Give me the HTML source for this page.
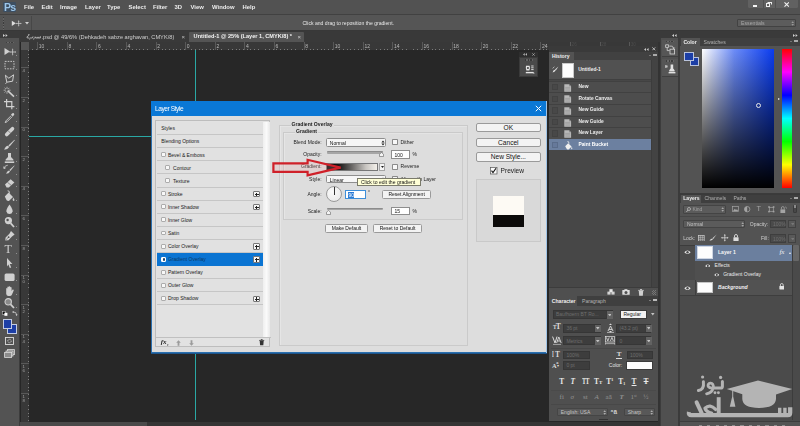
<!DOCTYPE html>
<html>
<head>
<meta charset="utf-8">
<title>Layer Style</title>
<style>
*{box-sizing:border-box;margin:0;padding:0}
html,body{width:800px;height:426px;overflow:hidden;background:#262626}
body{font-family:"Liberation Sans",sans-serif;font-size:6.5px;color:#ddd;position:relative}
.a{position:absolute}
.t{position:absolute;white-space:nowrap;line-height:1}
#stage{position:absolute;left:0;top:0;width:800px;height:426px;overflow:hidden;filter:blur(0.4px)}
/* top bars */
#menubar{left:0;top:0;width:800px;height:14px;background:#525252}
#optbar{left:0;top:14px;width:800px;height:17px;background:#555555;border-top:1px solid #414141;border-bottom:1px solid #383838}
#menubar .t{top:5.3px;font-size:5.9px;font-weight:bold;color:#ececec}
/* tab bar */
#dockgap{left:0;top:31px;width:800px;height:7px;background:#3b3b3b}
#tabbar{left:20px;top:31px;width:640px;height:11px;background:#393939}
/* toolbar */
#tools{left:0;top:38px;width:20px;height:388px;background:#535353;border-right:1px solid #3c3c3c}
/* canvas */
#canvas{left:29px;top:50px;width:631px;height:372px;background:#272727}
#rulerh{left:21px;top:42px;width:639px;height:8px;background:#383838;overflow:hidden}
#rulerv{left:21px;top:50px;width:8px;height:372px;background:#383838;overflow:hidden}
/* dialog */
#dlg{left:150.5px;top:101px;width:396.7px;height:252.4px;background:#dddddd;box-shadow:inset 0 0 0 1px #2a6fae}
#dlgtitle{left:150.5px;top:101px;width:396.7px;height:14.8px;background:#0a78d6}
#list{left:155.2px;top:120px;width:114.8px;height:227px;background:#e2e2e2;border:0.8px solid #bdbdbd}
.row{position:absolute;left:0.5px;width:106.2px;height:13.07px;border-bottom:0.8px solid #c6c6c6;color:#1a1a1a;font-size:5px;background:#e1e1e1}
.row .t{top:4.2px}
.row.sel{background:#0a74d2;color:#0c3a66;border-bottom-color:#0a74d2}
.cb{position:absolute;left:4.4px;top:3.8px;width:4.9px;height:4.9px;background:#f8f8f8;border:0.6px solid #acacac;border-radius:1px}
.cb.on{background:#fff;border-color:#fff}
.cb.on:after{content:"";position:absolute;left:0.8px;top:0.6px;width:2px;height:2.4px;border-radius:1px;background:#246}
.plus{position:absolute;left:96.7px;top:3.4px;width:6.4px;height:6.4px;background:#f6f6f6;border:0.6px solid #777;border-radius:1px}
.plus:before{content:"";position:absolute;left:0.8px;top:2.1px;width:3.6px;height:1px;background:#222}
.plus:after{content:"";position:absolute;left:2.1px;top:0.8px;width:1px;height:3.6px;background:#222}
.btn{position:absolute;background:#f3f3f3;border:0.7px solid #9a9a9a;border-radius:1.5px;color:#111;text-align:center;white-space:nowrap}
.inp{position:absolute;background:#fff;border:0.7px solid #8e8e8e}
.lbl{position:absolute;white-space:nowrap;color:#1c1c1c;font-size:5px;line-height:1}
.lbl.r{left:270px;width:51.6px;text-align:right}
.cb2{position:absolute;width:6.2px;height:6.2px;background:#f8f8f8;border:0.7px solid #8a8a8a;border-radius:0.8px}
.btn.big{width:64.6px;height:9.8px;font-size:6.6px;line-height:8.4px;border-radius:2px}
.hrow.hsel{background:#6c80a0;border-top-color:#6c80a0;color:#fff}
.hrow{background:#4d4d4d}
.tb{position:absolute;top:81.2px;font-family:"Liberation Serif",serif;font-weight:bold;font-size:7.4px;line-height:1;color:#e9e9e9;white-space:nowrap}
.ot{position:absolute;top:98px;font-family:"Liberation Serif",serif;font-size:7px;line-height:1;color:#929292;white-space:nowrap}
/* panels */
.panel{position:absolute;background:#535353}
.ptab{position:absolute;background:#3d3d3d}
.hrow{position:absolute;left:0;width:102px;height:11.7px;border-top:0.9px solid #414141;font-size:5.1px;color:#ececec}
</style>
</head>
<body>
<div id="stage">

<!-- canvas area -->
<div class="a" id="canvas"></div>
<div class="a" id="rulerh"><div class="a" style="left:16.2px;top:0;width:0.8px;height:8px;background:#585858"></div><div class="t" style="left:17.8px;top:2.2px;font-size:5px;color:#b8b8b8">10</div><div class="a" style="left:45.8px;top:0;width:0.8px;height:8px;background:#585858"></div><div class="t" style="left:47.4px;top:2.2px;font-size:5px;color:#b8b8b8">8</div><div class="a" style="left:75.4px;top:0;width:0.8px;height:8px;background:#585858"></div><div class="t" style="left:77.0px;top:2.2px;font-size:5px;color:#b8b8b8">6</div><div class="a" style="left:105.0px;top:0;width:0.8px;height:8px;background:#585858"></div><div class="t" style="left:106.6px;top:2.2px;font-size:5px;color:#b8b8b8">4</div><div class="a" style="left:134.6px;top:0;width:0.8px;height:8px;background:#585858"></div><div class="t" style="left:136.2px;top:2.2px;font-size:5px;color:#b8b8b8">2</div><div class="a" style="left:164.2px;top:0;width:0.8px;height:8px;background:#585858"></div><div class="t" style="left:165.8px;top:2.2px;font-size:5px;color:#b8b8b8">0</div><div class="a" style="left:193.8px;top:0;width:0.8px;height:8px;background:#585858"></div><div class="t" style="left:195.4px;top:2.2px;font-size:5px;color:#b8b8b8">2</div><div class="a" style="left:223.4px;top:0;width:0.8px;height:8px;background:#585858"></div><div class="t" style="left:225.0px;top:2.2px;font-size:5px;color:#b8b8b8">4</div><div class="a" style="left:253.0px;top:0;width:0.8px;height:8px;background:#585858"></div><div class="t" style="left:254.6px;top:2.2px;font-size:5px;color:#b8b8b8">6</div><div class="a" style="left:282.6px;top:0;width:0.8px;height:8px;background:#585858"></div><div class="t" style="left:284.2px;top:2.2px;font-size:5px;color:#b8b8b8">8</div><div class="a" style="left:312.2px;top:0;width:0.8px;height:8px;background:#585858"></div><div class="t" style="left:313.8px;top:2.2px;font-size:5px;color:#b8b8b8">10</div><div class="a" style="left:341.8px;top:0;width:0.8px;height:8px;background:#585858"></div><div class="t" style="left:343.4px;top:2.2px;font-size:5px;color:#b8b8b8">12</div><div class="a" style="left:371.4px;top:0;width:0.8px;height:8px;background:#585858"></div><div class="t" style="left:373.0px;top:2.2px;font-size:5px;color:#b8b8b8">14</div><div class="a" style="left:401.0px;top:0;width:0.8px;height:8px;background:#585858"></div><div class="t" style="left:402.6px;top:2.2px;font-size:5px;color:#b8b8b8">16</div><div class="a" style="left:430.6px;top:0;width:0.8px;height:8px;background:#585858"></div><div class="t" style="left:432.2px;top:2.2px;font-size:5px;color:#b8b8b8">18</div><div class="a" style="left:460.2px;top:0;width:0.8px;height:8px;background:#585858"></div><div class="t" style="left:461.8px;top:2.2px;font-size:5px;color:#b8b8b8">20</div><div class="a" style="left:489.8px;top:0;width:0.8px;height:8px;background:#585858"></div><div class="t" style="left:491.4px;top:2.2px;font-size:5px;color:#b8b8b8">22</div><div class="a" style="left:519.4px;top:0;width:0.8px;height:8px;background:#585858"></div><div class="t" style="left:521.0px;top:2.2px;font-size:5px;color:#b8b8b8">24</div><div class="a" style="left:549.0px;top:0;width:0.8px;height:8px;background:#585858"></div><div class="t" style="left:550.6px;top:1.2px;font-size:4.6px;color:#4c4c4c">26</div><div class="a" style="left:578.6px;top:0;width:0.8px;height:8px;background:#585858"></div><div class="t" style="left:580.2px;top:1.2px;font-size:4.6px;color:#4c4c4c">28</div><div class="a" style="left:608.2px;top:0;width:0.8px;height:8px;background:#585858"></div><div class="t" style="left:609.8px;top:1.2px;font-size:4.6px;color:#4c4c4c">30</div><div class="a" style="left:637.8px;top:0;width:0.8px;height:8px;background:#585858"></div><div class="t" style="left:639.4px;top:1.2px;font-size:4.6px;color:#4c4c4c">32</div><div class="a" style="left:0;top:6.9px;width:640px;height:1.1px;background:repeating-linear-gradient(90deg,#7c7c7c 0,#7c7c7c 0.9px,transparent 0.9px,transparent 3.7px)"></div></div>
<div class="a" id="rulerv"><div class="a" style="left:0;top:17.4px;width:8px;height:0.8px;background:#585858"></div><div class="t" style="left:1.4px;top:19.0px;font-size:4.4px;color:#a0a0a0">4</div><div class="a" style="left:0;top:47.0px;width:8px;height:0.8px;background:#585858"></div><div class="t" style="left:1.4px;top:48.6px;font-size:4.4px;color:#a0a0a0">2</div><div class="a" style="left:0;top:76.6px;width:8px;height:0.8px;background:#585858"></div><div class="t" style="left:1.4px;top:78.2px;font-size:4.4px;color:#a0a0a0">0</div><div class="a" style="left:0;top:106.2px;width:8px;height:0.8px;background:#585858"></div><div class="t" style="left:1.4px;top:107.8px;font-size:4.4px;color:#a0a0a0">2</div><div class="a" style="left:0;top:135.8px;width:8px;height:0.8px;background:#585858"></div><div class="t" style="left:1.4px;top:137.4px;font-size:4.4px;color:#a0a0a0">4</div><div class="a" style="left:0;top:165.4px;width:8px;height:0.8px;background:#585858"></div><div class="t" style="left:1.4px;top:167.0px;font-size:4.4px;color:#a0a0a0">6</div><div class="a" style="left:0;top:195.0px;width:8px;height:0.8px;background:#585858"></div><div class="t" style="left:1.4px;top:196.6px;font-size:4.4px;color:#a0a0a0">8</div><div class="a" style="left:0;top:224.6px;width:8px;height:0.8px;background:#585858"></div><div class="t" style="left:1.4px;top:226.2px;font-size:4.4px;color:#a0a0a0">1</div><div class="t" style="left:1.4px;top:230.4px;font-size:4.4px;color:#a0a0a0">0</div><div class="a" style="left:0;top:254.2px;width:8px;height:0.8px;background:#585858"></div><div class="t" style="left:1.4px;top:255.8px;font-size:4.4px;color:#a0a0a0">1</div><div class="t" style="left:1.4px;top:260.0px;font-size:4.4px;color:#a0a0a0">2</div><div class="a" style="left:0;top:283.8px;width:8px;height:0.8px;background:#585858"></div><div class="t" style="left:1.4px;top:285.4px;font-size:4.4px;color:#a0a0a0">1</div><div class="t" style="left:1.4px;top:289.6px;font-size:4.4px;color:#a0a0a0">4</div><div class="a" style="left:0;top:313.4px;width:8px;height:0.8px;background:#585858"></div><div class="t" style="left:1.4px;top:315.0px;font-size:4.4px;color:#a0a0a0">1</div><div class="t" style="left:1.4px;top:319.2px;font-size:4.4px;color:#a0a0a0">6</div><div class="a" style="left:0;top:343.0px;width:8px;height:0.8px;background:#585858"></div><div class="t" style="left:1.4px;top:344.6px;font-size:4.4px;color:#a0a0a0">1</div><div class="t" style="left:1.4px;top:348.8px;font-size:4.4px;color:#a0a0a0">8</div><div class="a" style="left:6.9px;top:0;width:1.1px;height:372px;background:repeating-linear-gradient(180deg,#7c7c7c 0,#7c7c7c 0.9px,transparent 0.9px,transparent 3.7px)"></div></div>
<div class="a" style="left:21px;top:42px;width:8px;height:8px;background:#555"></div>
<!-- guides -->
<div class="a" style="left:195px;top:50px;width:1px;height:370px;background:#2aa8a4"></div>
<div class="a" style="left:29px;top:136px;width:122px;height:1px;background:#2aa8a4"></div>
<!-- status -->
<div class="a" style="left:20px;top:422px;width:640px;height:4px;background:#353535"></div>
<div class="a" style="left:20px;top:422px;width:127px;height:4px;background:#4a4a4a"></div>

<!-- mini floating panel -->
<div class="a" style="left:519.4px;top:51.6px;width:18.2px;height:5px;background:#2e2e2e">
  <svg class="a" style="left:3.6px;top:1.2px" width="4.4" height="2.8" viewBox="0 0 5 3"><path d="M0 1.5L2 0V3ZM2.6 1.5L4.6 0V3Z" fill="#b8b8b8"/></svg>
  <svg class="a" style="left:12.6px;top:1px" width="3" height="3" viewBox="0 0 4 4"><path d="M0.4 0.4L3.6 3.6M3.6 0.4L0.4 3.6" stroke="#b8b8b8" stroke-width="0.9"/></svg>
</div>
<div class="a" style="left:519.4px;top:56.6px;width:18.2px;height:20.6px;background:#4a4a4a;border:0.7px solid #3a3a3a">
  <div class="a" style="left:4.6px;top:1.8px;width:8.4px;height:1.2px;background:repeating-linear-gradient(90deg,#383838 0,#383838 0.8px,#636363 0.8px,#636363 1.6px)"></div>
  <svg class="a" style="left:4.4px;top:7px" width="10" height="10" viewBox="0 0 10 10"><path d="M1 0.8H4.6Q5.4 3 4.4 5.4H1.4Q0.4 3 1 0.8Z" fill="#e6e6e6"/><circle cx="2.9" cy="3" r="1.1" fill="#4a4a4a"/><path d="M6.2 1H8.6M6.2 2.8H8.6M6.2 4.6H8.6" stroke="#e6e6e6" stroke-width="0.9"/><path d="M0.8 7.6H8.2" stroke="#e6e6e6" stroke-width="1.4"/><path d="M8.6 6.8L9.6 8.4H7.8Z" fill="#e6e6e6"/></svg>
</div>
<!-- top bars -->
<div class="a" id="menubar">
  <div class="a" style="left:3px;top:2px;width:13px;height:9.6px;background:rgba(44,74,108,0.55);border-radius:1px;filter:blur(0.6px)"></div><div class="t" style="left:3.9px;top:1.5px;font-size:10.6px;font-weight:bold;color:#9cc6ea;letter-spacing:-0.7px">Ps</div>
  <div class="t" style="left:24px">File</div>
  <div class="t" style="left:41.5px">Edit</div>
  <div class="t" style="left:60px">Image</div>
  <div class="t" style="left:85px">Layer</div>
  <div class="t" style="left:107px">Type</div>
  <div class="t" style="left:128.5px">Select</div>
  <div class="t" style="left:153px">Filter</div>
  <div class="t" style="left:174.5px">3D</div>
  <div class="t" style="left:190.5px">View</div>
  <div class="t" style="left:212px">Window</div>
  <div class="t" style="left:242.5px">Help</div>
  <div class="a" style="left:748px;top:0;width:50px;height:8.4px;background:#616161;border-radius:0 0 1.5px 1.5px">
    <div class="a" style="left:4.6px;top:5.4px;width:4.6px;height:1.9px;background:#f4f4f4"></div>
    <div class="a" style="left:14.6px;top:0;width:0.6px;height:8.4px;background:#505050"></div>
    <div class="a" style="left:17.6px;top:3.4px;width:4.4px;height:3.4px;border:0.9px solid #f0f0f0"></div>
    <div class="a" style="left:19.4px;top:2px;width:4.4px;height:3.4px;border:0.9px solid #f0f0f0;border-left-color:transparent;border-bottom-color:transparent"></div>
    <div class="a" style="left:27.4px;top:0;width:0.6px;height:8.4px;background:#505050"></div>
    <svg class="a" style="left:36px;top:2.2px" width="5.4" height="5" viewBox="0 0 5.4 5"><path d="M0.5 0.4L4.9 4.6M4.9 0.4L0.5 4.6" stroke="#f4f4f4" stroke-width="1.1" fill="none"/></svg>
  </div>
</div>
<div class="a" id="optbar">
  <svg class="a" style="left:10.6px;top:4.6px" width="11.4" height="7.4" viewBox="0 0 14 9"><path d="M1 0.8L6 4L1 7.2Z" fill="#dcdcdc"/><path d="M9.4 1.4V7M6.6 4.2H12.2" stroke="#cfcfcf" stroke-width="0.9" fill="none"/><path d="M9.4 0.4L8.4 1.8H10.4ZM9.4 8L8.4 6.6H10.4ZM5.6 4.2L7 3.2V5.2ZM13.2 4.2L11.8 3.2V5.2Z" fill="#cfcfcf"/></svg>
  <svg class="a" style="left:24.6px;top:7.2px" width="4" height="3" viewBox="0 0 4 3"><path d="M0 0H4L2 2.6Z" fill="#d0d0d0"/></svg>
  <div class="a" style="left:2.5px;top:1.5px;width:1.2px;height:13px;background:repeating-linear-gradient(180deg,#3c3c3c 0,#3c3c3c 0.8px,#666 0.8px,#666 1.6px)"></div>
  <div class="a" style="left:31px;top:1px;width:0.8px;height:14px;background:#474747"></div>
  <div class="t" style="left:302.5px;top:5.6px;font-size:5.1px;color:#e8e8e8">Click and drag to reposition the gradient.</div>
  <div class="a" style="left:737px;top:3.6px;width:58.6px;height:8.2px;background:#5c5c5c;border:0.7px solid #424242;border-radius:1px"><div class="t" style="left:3px;top:1.5px;font-size:5.2px;color:#a9a9a9">Essentials</div><svg class="a" style="left:53px;top:1.4px" width="3.4" height="5" viewBox="0 0 4 6"><path d="M0.4 2.4L2 0.4L3.6 2.4ZM0.4 3.6L2 5.6L3.6 3.6Z" fill="#9a9a9a"/></svg></div>
</div>
<div class="a" id="dockgap"><svg class="a" style="left:2.6px;top:2.6px" width="5" height="3" viewBox="0 0 5 3"><path d="M2 1.5L0 0V3ZM4.6 1.5L2.6 0V3Z" fill="#d0d0d0"/></svg></div>
<div class="a" id="tabbar">
  <svg class="a" style="left:6px;top:3.2px" width="15" height="6.4" viewBox="0 0 15 6.4"><path d="M14.4 2.2V4H12.8V2.8M12.8 4H11.2V2.8M11.2 4H9.6L9.2 2.6M8.4 3.4L7.6 5.6M7 2.4L6.4 4H5M4.4 3.4L3.6 5.6M3.4 1L1 2.8Q0.4 4 2 4H3.2M2.2 0.6L3.6 0" fill="none" stroke="#d2d2d2" stroke-width="0.75"/></svg>
  <div class="t" style="left:21.5px;top:4px;font-size:5.67px;color:#cfcfcf">.psd @ 49/6% (Dehkadeh sabze arghavan, CMYK/8)</div>
  <div class="t" style="left:161.4px;top:2.6px;font-size:6px;color:#c0c0c0">&times;</div>
  <div class="a" style="left:168.6px;top:0.6px;width:115.6px;height:10.4px;background:#545454;border-radius:1px 1px 0 0"></div>
  <div class="t" style="left:173.6px;top:3.2px;font-size:5.6px;font-weight:bold;color:#f2f2f2">Untitled-1 @ 25% (Layer 1, CMYK/8) *</div>
  <div class="t" style="left:277.6px;top:2.6px;font-size:6px;color:#d0d0d0">&times;</div>
</div>
<div class="a" id="tools">
<div class="a" style="left:6px;top:4px;width:8px;height:1.4px;background:repeating-linear-gradient(90deg,#3e3e3e 0,#3e3e3e 0.8px,#686868 0.8px,#686868 1.6px)"></div>
<svg class="a" style="left:2.6px;top:7.5px" width="13" height="12" viewBox="0 0 13 12"><path d="M1.5 2L7 5.5L1.5 9Z" fill="#d0d0d0"/><path d="M9.6 3.4V8.6M7 6H12.2" stroke="#d0d0d0" stroke-width="0.8"/><path d="M9.6 2.4L8.8 3.6H10.4ZM9.6 9.6L8.8 8.4H10.4ZM6 6L7.2 5.2V6.8ZM13.2 6L12 5.2V6.8Z" fill="#d0d0d0"/></svg><div class="a" style="left:16px;top:17.1px;width:0;height:0;border-left:1.8px solid transparent;border-bottom:1.8px solid #cfcfcf"></div>
<svg class="a" style="left:2.6px;top:21.0px" width="13" height="12" viewBox="0 0 13 12"><rect x="2" y="2.4" width="9" height="7.4" fill="none" stroke="#d0d0d0" stroke-width="0.9" stroke-dasharray="1.6 1.1"/></svg><div class="a" style="left:16px;top:30.6px;width:0;height:0;border-left:1.8px solid transparent;border-bottom:1.8px solid #cfcfcf"></div>
<svg class="a" style="left:2.6px;top:34.5px" width="13" height="12" viewBox="0 0 13 12"><path d="M2.4 2.2L5.8 5.2L10.6 1.8L9.6 8.2L3.8 9.2Z" fill="none" stroke="#d0d0d0" stroke-width="1"/><path d="M3.8 9.2L2.4 11" stroke="#d0d0d0" stroke-width="0.8"/></svg><div class="a" style="left:16px;top:44.1px;width:0;height:0;border-left:1.8px solid transparent;border-bottom:1.8px solid #cfcfcf"></div>
<svg class="a" style="left:2.6px;top:47.5px" width="13" height="12" viewBox="0 0 13 12"><path d="M4.6 4.6L11 10.6" stroke="#d0d0d0" stroke-width="1.5"/><path d="M4 0.8V3M4 5.6V7.8M0.6 4.2H2.8M5.4 4.2H7.6M1.6 1.8L3 3.2M6.4 1.8L5 3.2M1.6 6.6L3 5.2" stroke="#d0d0d0" stroke-width="0.7"/></svg><div class="a" style="left:16px;top:57.1px;width:0;height:0;border-left:1.8px solid transparent;border-bottom:1.8px solid #cfcfcf"></div>
<svg class="a" style="left:2.6px;top:60.0px" width="13" height="12" viewBox="0 0 13 12"><path d="M3.6 1V8.6H11.4M1 3.6H8.8V11.2" fill="none" stroke="#d0d0d0" stroke-width="1.2"/></svg><div class="a" style="left:16px;top:69.6px;width:0;height:0;border-left:1.8px solid transparent;border-bottom:1.8px solid #cfcfcf"></div>
<svg class="a" style="left:2.6px;top:73.5px" width="13" height="12" viewBox="0 0 13 12"><path d="M10.8 1.2Q12 2.4 10.6 3.6L9.8 4.4L8 2.6L8.8 1.8Q9.8 0.4 10.8 1.2Z" fill="#d0d0d0"/><path d="M8.2 3.6L3 8.8L2.2 10.6L4 9.8L9.2 4.6" fill="none" stroke="#d0d0d0" stroke-width="0.9"/></svg><div class="a" style="left:16px;top:83.1px;width:0;height:0;border-left:1.8px solid transparent;border-bottom:1.8px solid #cfcfcf"></div>
<svg class="a" style="left:2.6px;top:87.0px" width="13" height="12" viewBox="0 0 13 12"><path d="M2.4 8.2L8.2 2.4Q9.6 1.2 10.8 2.4Q12 3.6 10.8 5L5 10.8Q3.6 12 2.4 10.8Q1.2 9.6 2.4 8.2Z" fill="#d0d0d0"/><path d="M5 5.6L8 8.6" stroke="#535353" stroke-width="0.6"/></svg><div class="a" style="left:16px;top:96.6px;width:0;height:0;border-left:1.8px solid transparent;border-bottom:1.8px solid #cfcfcf"></div>
<svg class="a" style="left:2.6px;top:100.5px" width="13" height="12" viewBox="0 0 13 12"><path d="M11.4 0.8L5.4 6.4L6.6 7.6L11.8 1.2Z" fill="#d0d0d0"/><path d="M5 6.8Q2.6 7 1.2 10.8Q4.8 10.6 6.2 8Z" fill="#d0d0d0"/></svg><div class="a" style="left:16px;top:110.1px;width:0;height:0;border-left:1.8px solid transparent;border-bottom:1.8px solid #cfcfcf"></div>
<svg class="a" style="left:2.6px;top:113.5px" width="13" height="12" viewBox="0 0 13 12"><path d="M5 1H8V5L10.4 7.4V8.6H2.6V7.4L5 5Z" fill="#d0d0d0"/><rect x="1.8" y="9.4" width="9.4" height="1.6" fill="#d0d0d0"/></svg><div class="a" style="left:16px;top:123.1px;width:0;height:0;border-left:1.8px solid transparent;border-bottom:1.8px solid #cfcfcf"></div>
<svg class="a" style="left:2.6px;top:126.0px" width="13" height="12" viewBox="0 0 13 12"><path d="M11.2 1.4L6.4 6L7.4 7L11.6 1.8Z" fill="#d0d0d0"/><path d="M6 6.4Q4.2 6.6 3 9.8Q6 9.6 7 7.4Z" fill="#d0d0d0"/><path d="M1 4.4Q1.6 1.4 4.8 1.2M0.6 2.6L1 4.6L2.8 3.8" fill="none" stroke="#d0d0d0" stroke-width="0.8"/></svg><div class="a" style="left:16px;top:135.6px;width:0;height:0;border-left:1.8px solid transparent;border-bottom:1.8px solid #cfcfcf"></div>
<svg class="a" style="left:2.6px;top:138.5px" width="13" height="12" viewBox="0 0 13 12"><path d="M2 7.4L7.6 2.2L11.4 5.4L5.8 10.6H3.6Z" fill="#d0d0d0"/><path d="M4.4 5.2L8.2 8.4" stroke="#535353" stroke-width="0.6"/></svg><div class="a" style="left:16px;top:148.1px;width:0;height:0;border-left:1.8px solid transparent;border-bottom:1.8px solid #cfcfcf"></div>
<svg class="a" style="left:2.6px;top:152.0px" width="13" height="12" viewBox="0 0 13 12"><path d="M1.8 6.6L5.6 2.6L10 7L6.2 10.8Q4.8 11.4 3.6 10.2Z" fill="#d0d0d0"/><path d="M4.6 0.8Q6.6 0.2 6.6 3.6" stroke="#d0d0d0" stroke-width="0.9" fill="none"/><path d="M10.4 7.4Q12 9.8 11 11Q9.6 11.2 9.6 9.6Z" fill="#d0d0d0"/></svg><div class="a" style="left:16px;top:161.6px;width:0;height:0;border-left:1.8px solid transparent;border-bottom:1.8px solid #cfcfcf"></div>
<svg class="a" style="left:2.6px;top:165.0px" width="13" height="12" viewBox="0 0 13 12"><path d="M6.5 1.4Q10 6.2 9.6 8.4Q9 11 6.5 11Q4 11 3.4 8.4Q3 6.2 6.5 1.4Z" fill="#d0d0d0"/></svg><div class="a" style="left:16px;top:174.6px;width:0;height:0;border-left:1.8px solid transparent;border-bottom:1.8px solid #cfcfcf"></div>
<svg class="a" style="left:2.6px;top:178.0px" width="13" height="12" viewBox="0 0 13 12"><circle cx="5.4" cy="4.6" r="3.6" fill="#d0d0d0"/><path d="M7.6 7.2L11 11" stroke="#d0d0d0" stroke-width="1.8"/><circle cx="4.6" cy="4" r="1.2" fill="#535353"/></svg><div class="a" style="left:16px;top:187.6px;width:0;height:0;border-left:1.8px solid transparent;border-bottom:1.8px solid #cfcfcf"></div>
<svg class="a" style="left:2.6px;top:191.5px" width="13" height="12" viewBox="0 0 13 12"><path d="M8 1L11.6 4.6L9 6.4L5.4 10.2L2.2 10.6L2.6 7.4L6.4 3.8Z" fill="#d0d0d0"/><circle cx="5.6" cy="7.2" r="0.9" fill="#535353"/><path d="M2.4 10.4L5.2 7.6" stroke="#535353" stroke-width="0.5"/></svg><div class="a" style="left:16px;top:201.1px;width:0;height:0;border-left:1.8px solid transparent;border-bottom:1.8px solid #cfcfcf"></div>
<div class="t" style="left:4.4px;top:204.6px;font-size:12px;color:#d0d0d0;font-family:'Liberation Serif',serif">T</div><div class="a" style="left:16px;top:214.6px;width:0;height:0;border-left:1.8px solid transparent;border-bottom:1.8px solid #cfcfcf"></div>
<svg class="a" style="left:2.6px;top:219.0px" width="13" height="12" viewBox="0 0 13 12"><path d="M4 1L9.4 7L6.8 7L8.2 10.4L6.8 11L5.4 7.6L4 9.4Z" fill="#d0d0d0"/></svg><div class="a" style="left:16px;top:228.6px;width:0;height:0;border-left:1.8px solid transparent;border-bottom:1.8px solid #cfcfcf"></div>
<svg class="a" style="left:2.6px;top:232.5px" width="13" height="12" viewBox="0 0 13 12"><rect x="1.6" y="2.4" width="10" height="7.6" rx="1.6" fill="#d0d0d0"/></svg><div class="a" style="left:16px;top:242.1px;width:0;height:0;border-left:1.8px solid transparent;border-bottom:1.8px solid #cfcfcf"></div>
<svg class="a" style="left:2.6px;top:246.5px" width="13" height="12" viewBox="0 0 13 12"><path d="M3.2 6.4V3.4Q3.8 2.6 4.4 3.4V2Q5 1.2 5.8 2V1.6Q6.6 0.8 7.2 1.6V2.2Q8 1.6 8.6 2.4V6L9.6 4.6Q10.6 4.2 10.8 5.2L9 9.4Q8.4 11 6.6 11H5.4Q3.6 10.8 3.2 9Z" fill="#d0d0d0"/></svg><div class="a" style="left:16px;top:256.1px;width:0;height:0;border-left:1.8px solid transparent;border-bottom:1.8px solid #cfcfcf"></div>
<svg class="a" style="left:2.6px;top:259.0px" width="13" height="12" viewBox="0 0 13 12"><circle cx="5.2" cy="4.8" r="3.2" fill="#8a8a8a" stroke="#d0d0d0" stroke-width="1.1"/><path d="M7.6 7.4L11 11" stroke="#d0d0d0" stroke-width="1.8"/></svg><div class="a" style="left:16px;top:268.6px;width:0;height:0;border-left:1.8px solid transparent;border-bottom:1.8px solid #cfcfcf"></div>
<svg class="a" style="left:2px;top:272.6px" width="6" height="5" viewBox="0 0 6 5"><rect x="0.3" y="0.3" width="3" height="3" fill="#111" stroke="#ddd" stroke-width="0.5"/><rect x="2.4" y="1.8" width="3" height="3" fill="#fff"/></svg>
<svg class="a" style="left:12px;top:272.6px" width="6" height="5" viewBox="0 0 6 5"><path d="M1 1Q4.6 0.6 4.6 4" stroke="#ddd" stroke-width="0.7" fill="none"/><path d="M0 1L1.6 0V2ZM4.6 5L3.6 3.4H5.6Z" fill="#ddd"/></svg>
<div class="a" style="left:7.4px;top:286.2px;width:9.4px;height:9.8px;background:#1d3fa6;border:0.9px solid #c2cbe2"></div>
<div class="a" style="left:2.6px;top:281.2px;width:9.4px;height:9.4px;background:#1d3fa6;border:0.9px solid #c2cbe2"></div>
<svg class="a" style="left:4.6px;top:298.6px" width="9" height="8" viewBox="0 0 9 8"><rect x="0.5" y="0.5" width="8" height="7" fill="none" stroke="#dcdcdc" stroke-width="0.9"/><circle cx="4.5" cy="4" r="1.7" fill="none" stroke="#dcdcdc" stroke-width="0.8" stroke-dasharray="1 0.6"/></svg>
<svg class="a" style="left:4px;top:311.4px" width="11" height="9" viewBox="0 0 11 9"><rect x="3.4" y="0.6" width="7" height="5" fill="#7a7a7a" stroke="#dcdcdc" stroke-width="0.8"/><rect x="2" y="2" width="7" height="5" fill="#7a7a7a" stroke="#dcdcdc" stroke-width="0.8"/><rect x="0.6" y="3.4" width="7" height="5" fill="#8c8c8c" stroke="#dcdcdc" stroke-width="0.8"/></svg>
</div>

<!-- dialog -->
<div class="a" id="dlg"></div>
<div class="a" id="dlgtitle"><div class="t" style="left:4.4px;top:4.8px;font-size:6.6px;color:#fff;letter-spacing:-0.42px">Layer Style</div>
<svg class="a" style="left:384.6px;top:4.2px" width="7" height="7" viewBox="0 0 7 7"><path d="M0.8 0.8L6.2 6.2M6.2 0.8L0.8 6.2" stroke="#fff" stroke-width="1" fill="none"/></svg></div>
<div class="a" id="list">
<div class="row" style="top:1.20px"><div class="t" style="left:4.6px">Styles</div></div>
<div class="row" style="top:14.27px"><div class="t" style="left:4.6px">Blending Options</div></div>
<div class="row" style="top:27.34px"><div class="cb"></div><div class="t" style="left:11.3px">Bevel &amp; Emboss</div></div>
<div class="row" style="top:40.41px"><div class="cb" style="left:8.8px"></div><div class="t" style="left:16.4px">Contour</div></div>
<div class="row" style="top:53.48px"><div class="cb" style="left:8.8px"></div><div class="t" style="left:16.4px">Texture</div></div>
<div class="row" style="top:66.55px"><div class="cb"></div><div class="t" style="left:11.3px">Stroke</div><div class="plus"></div></div>
<div class="row" style="top:79.62px"><div class="cb"></div><div class="t" style="left:11.3px">Inner Shadow</div><div class="plus"></div></div>
<div class="row" style="top:92.69px"><div class="cb"></div><div class="t" style="left:11.3px">Inner Glow</div></div>
<div class="row" style="top:105.76px"><div class="cb"></div><div class="t" style="left:11.3px">Satin</div></div>
<div class="row" style="top:118.83px"><div class="cb"></div><div class="t" style="left:11.3px">Color Overlay</div><div class="plus"></div></div>
<div class="row sel" style="top:131.90px"><div class="cb on"></div><div class="t" style="left:11.3px">Gradient Overlay</div><div class="plus"></div></div>
<div class="row" style="top:144.97px"><div class="cb"></div><div class="t" style="left:11.3px">Pattern Overlay</div></div>
<div class="row" style="top:158.04px"><div class="cb"></div><div class="t" style="left:11.3px">Outer Glow</div></div>
<div class="row" style="top:171.11px"><div class="cb"></div><div class="t" style="left:11.3px">Drop Shadow</div><div class="plus"></div></div>
<div class="a" style="left:0;top:215.8px;width:115px;height:0.8px;background:#c0c0c0"></div>
<div class="t" style="left:4.6px;top:217.6px;font-size:7px;font-style:italic;font-weight:bold;color:#222;font-family:'Liberation Serif',serif">fx</div><div class="t" style="left:10.6px;top:222.6px;font-size:3px;color:#333">&#9662;</div>
<svg class="a" style="left:19.6px;top:218.8px" width="5" height="6" viewBox="0 0 5 6"><path d="M2.5 0.2L4.8 2.8H3.4V5.8H1.6V2.8H0.2Z" fill="#9c9c9c"/></svg>
<svg class="a" style="left:33px;top:218.8px" width="5" height="6" viewBox="0 0 5 6"><path d="M2.5 5.8L4.8 3.2H3.4V0.2H1.6V3.2H0.2Z" fill="#9c9c9c"/></svg>
<svg class="a" style="left:103.2px;top:218.4px" width="5.4" height="6.6" viewBox="0 0 6 7"><path d="M0.8 2H5.2L4.8 6.8H1.2Z" fill="#333"/><rect x="0.2" y="0.9" width="5.6" height="0.9" fill="#333"/><rect x="2" y="0.1" width="2" height="0.9" fill="#333"/></svg>

<div class="a" style="left:106.7px;top:1px;width:7px;height:215px;background:linear-gradient(90deg,#efefef,#fafafa 50%,#e8e8e8)"></div>
</div>

<div class="a" style="left:545.9px;top:101px;width:1.3px;height:252.4px;background:#9fc3e6"></div>
<div class="a" style="left:150.5px;top:352.5px;width:396.7px;height:0.9px;background:#1d558c"></div>
<!-- dialog right content -->
<div class="a" style="left:279.3px;top:124.5px;width:189.2px;height:221.4px;border:0.8px solid #cacaca;box-shadow:inset 0.6px 0.6px 0 #ececec"></div>
<div class="a" style="left:283.3px;top:132px;width:179.7px;height:87.5px;border:0.8px solid #cacaca;box-shadow:inset 0.6px 0.6px 0 #ececec"></div>
<div class="lbl" style="left:290.5px;top:121.8px;font-weight:bold;font-size:5.1px;background:#dddddd;padding:0 1px">Gradient Overlay</div>
<div class="lbl" style="left:295px;top:129.4px;font-weight:bold;font-size:5.1px;background:#dddddd;padding:0 1px">Gradient</div>

<div class="lbl r" style="top:139.8px">Blend Mode:</div>
<div class="inp" style="left:325.8px;top:137.7px;width:60.2px;height:9px;border-radius:1.5px;background:#f6f6f6"><div class="t" style="left:3px;top:2px;font-size:5px;color:#111">Normal</div>
<svg class="a" style="left:54.5px;top:1.6px" width="4" height="6" viewBox="0 0 4 6"><path d="M0.4 2.4L2 0.4L3.6 2.4ZM0.4 3.6L2 5.6L3.6 3.6Z" fill="#222"/></svg></div>
<div class="cb2" style="left:391.6px;top:139px"></div><div class="lbl" style="left:400.6px;top:139.8px">Dither</div>

<div class="lbl r" style="top:151.9px">Opacity:</div>
<div class="a" style="left:327px;top:151.3px;width:56px;height:2.4px;background:#a6a6a6;border-radius:1px;border-top:0.6px solid #8c8c8c"></div>
<svg class="a" style="left:379.4px;top:152.4px" width="5" height="5" viewBox="0 0 5 5"><path d="M0.5 2.2L2.5 0.5L4.5 2.2V4.5H0.5Z" fill="#f4f4f4" stroke="#666" stroke-width="0.6"/></svg>
<div class="inp" style="left:391px;top:150.2px;width:18.7px;height:8.6px"><div class="t" style="left:2.4px;top:1.8px;font-size:5px;color:#111">100</div></div>
<div class="lbl" style="left:412.6px;top:152.2px">%</div>

<div class="lbl r" style="top:164.2px">Gradient:</div>
<div class="a" style="left:325.8px;top:162.8px;width:52.7px;height:8.2px;border:0.7px solid #777;background:linear-gradient(90deg,#0a0a0a 0%,#141212 22%,#6a6866 50%,#c9c6c2 78%,#f3f0ea 100%)"></div>
<div class="a" style="left:378.5px;top:162.8px;width:6.8px;height:8.2px;border:0.7px solid #a4a4a4;background:#f4f4f4"><svg class="a" style="left:1.4px;top:2.6px" width="3" height="2" viewBox="0 0 3 2"><path d="M0 0H3L1.5 2Z" fill="#222"/></svg></div>
<div class="cb2" style="left:391.6px;top:163.6px"></div><div class="lbl" style="left:400.6px;top:164.4px">Reverse</div>

<div class="lbl r" style="top:176.7px">Style:</div>
<div class="inp" style="left:325.8px;top:174.9px;width:60.2px;height:8.6px;border-radius:1.5px;background:#f6f6f6"><div class="t" style="left:3px;top:1.9px;font-size:5px;color:#111">Linear</div>
<svg class="a" style="left:54.5px;top:1.4px" width="4" height="6" viewBox="0 0 4 6"><path d="M0.4 2.4L2 0.4L3.6 2.4ZM0.4 3.6L2 5.6L3.6 3.6Z" fill="#222"/></svg></div>
<div class="cb2 chk" style="left:391.6px;top:175.6px"></div><div class="lbl" style="left:400.6px;top:176.5px">Align with Layer</div>

<div class="lbl r" style="top:192.1px">Angle:</div>
<div class="a" style="left:325.7px;top:185.9px;width:16.6px;height:16.6px;border-radius:50%;border:0.7px solid #9a9a9a;background:radial-gradient(circle at 40% 35%,#fbfbfb,#e6e6e6)"></div>
<div class="a" style="left:333.6px;top:187.4px;width:0.7px;height:7.4px;background:#333"></div>
<div class="inp" style="left:345.4px;top:190px;width:20.2px;height:9px;border-color:#3f8fd8"><div class="a" style="left:1.6px;top:1.2px;width:6.4px;height:5.8px;background:#2a7bd6"></div><div class="t" style="left:2.2px;top:1.9px;font-size:5px;color:#fff">90</div></div>
<div class="lbl" style="left:368px;top:190.4px">&deg;</div>
<div class="btn" style="left:381.8px;top:190.4px;width:49.6px;height:8.8px;font-size:5px;line-height:7.6px">Reset Alignment</div>

<div class="lbl r" style="top:208.5px">Scale:</div>
<div class="a" style="left:327px;top:207.8px;width:56px;height:2.4px;background:#a6a6a6;border-radius:1px;border-top:0.6px solid #8c8c8c"></div>
<svg class="a" style="left:325.8px;top:209.6px" width="5" height="5" viewBox="0 0 5 5"><path d="M0.5 2.2L2.5 0.5L4.5 2.2V4.5H0.5Z" fill="#f4f4f4" stroke="#666" stroke-width="0.6"/></svg>
<div class="inp" style="left:391px;top:206.6px;width:18.7px;height:8.6px"><div class="t" style="left:2.4px;top:1.8px;font-size:5px;color:#111">15</div></div>
<div class="lbl" style="left:412.6px;top:208.6px">%</div>

<div class="btn" style="left:325.3px;top:224px;width:42.4px;height:8.5px;font-size:5px;line-height:7.3px">Make Default</div>
<div class="btn" style="left:373px;top:224px;width:49.2px;height:8.5px;font-size:5px;line-height:7.3px">Reset to Default</div>

<!-- tooltip -->
<div class="a" style="left:356.9px;top:177.6px;width:64.2px;height:8.4px;background:#ffffd6;border:0.7px solid #7a7a6a"><div class="t" style="left:3px;top:1.7px;font-size:5.07px;color:#111">Click to edit the gradient</div></div>

<!-- red arrow -->
<svg class="a" style="left:270px;top:156px" width="76" height="24" viewBox="0 0 76 24"><path d="M3.4 7.4H37.6V3.8L70.6 11.6L37.6 19.4V15.8H3.4Z" fill="rgba(236,170,170,0.22)" stroke="#cf2029" stroke-width="2.2" stroke-linejoin="miter"/></svg>

<!-- right buttons -->
<div class="btn big" style="left:476px;top:122.5px">OK</div>
<div class="btn big" style="left:476px;top:137.5px">Cancel</div>
<div class="btn big" style="left:476px;top:152.4px">New Style...</div>
<svg class="a" style="left:490.4px;top:167.3px" width="7.4" height="7.4" viewBox="0 0 7.4 7.4"><rect x="0.4" y="0.4" width="6.6" height="6.6" fill="#fbfbfb" stroke="#555" stroke-width="0.7"/><path d="M1.5 3.6L3 5.5L6 1.3" fill="none" stroke="#111" stroke-width="1.1"/></svg>
<div class="lbl" style="left:500.6px;top:167.9px;font-size:6.6px">Preview</div>
<div class="a" style="left:476px;top:179.3px;width:64.6px;height:62.6px;background:#d9d9d9;border:0.8px solid #c9c9c9"></div>
<div class="a" style="left:492.5px;top:196px;width:31.6px;height:18.9px;background:#fdfaf4"></div>
<div class="a" style="left:492.5px;top:214.9px;width:31.6px;height:12.4px;background:#0c0b0a"></div>

<!-- right panels -->
<div class="a" style="left:660px;top:31px;width:140px;height:395px;background:#3b3b3b"></div>
<!-- history (floating) -->
<div class="a" style="left:548.6px;top:45.6px;width:109.4px;height:6.6px;background:#3a3a3a">
  <svg class="a" style="left:95px;top:2px" width="5" height="3" viewBox="0 0 5 3"><path d="M0 1.5L2 0V3ZM2.6 1.5L4.6 0V3Z" fill="#c8c8c8"/></svg>
  <svg class="a" style="left:103.4px;top:1.6px" width="3.6" height="3.6" viewBox="0 0 4 4"><path d="M0.4 0.4L3.6 3.6M3.6 0.4L0.4 3.6" stroke="#d0d0d0" stroke-width="0.9"/></svg>
</div>
<div class="panel" id="hist" style="left:548.6px;top:52px;width:109.4px;height:244.4px;background:#474747;overflow:hidden">
  <div class="a" style="left:0;top:0;width:110px;height:8.4px;background:#414141"></div>
  <div class="a" style="left:0;top:0;width:25px;height:8.6px;background:#535353"></div>
  <div class="t" style="left:3.4px;top:1.9px;font-size:5.1px;font-weight:bold;color:#f0f0f0">History</div>
  <div class="a" style="left:100.6px;top:3px;width:2px;height:0;border-left:1.4px solid transparent;border-right:1.4px solid transparent;border-top:1.8px solid #aaa"></div>
  <div class="a" style="left:104.4px;top:2.2px;width:3.6px;height:3.6px;background:repeating-linear-gradient(180deg,#aaa 0,#aaa 0.6px,transparent 0.6px,transparent 1.3px)"></div>
  <!-- snapshot row -->
  <div class="a" style="left:0;top:8.4px;width:102px;height:19.6px;background:#515151;border-bottom:1px solid #404040"></div>
  <svg class="a" style="left:3.4px;top:14.4px" width="7" height="7" viewBox="0 0 7 7"><path d="M6.4 0.4L3 3.6L3.8 4.4Z" fill="#e6e6e6"/><path d="M2.8 3.8Q1.2 4 0.6 6.4Q2.8 6 3.6 4.6Z" fill="#e6e6e6"/><path d="M0.6 2.4L2.4 0.8" stroke="#ddd" stroke-width="0.7"/></svg>
  <div class="a" style="left:13.4px;top:10.6px;width:11.6px;height:15.6px;background:#fdfdfd;border:0.5px solid #c9c9c9"></div>
  <div class="t" style="left:29.6px;top:16.2px;font-weight:bold;font-size:4.9px;color:#efefef">Untitled-1</div>
  <div class="hrow" style="top:28.7px"><div class="a" style="left:3px;top:2.4px;width:6.4px;height:6.4px;background:#484848;border:0.6px solid #424242"></div><svg class="a" style="left:15.9px;top:2.2px" width="7.4" height="8" viewBox="0 0 7.4 8"><path d="M0.3 0.3H5L7.1 2.2V7.7H0.3Z" fill="#b9b9b9"/><path d="M5 0.3V2.2H7.1" fill="#8e8e8e"/><path d="M1.2 3.4H6.2M1.2 4.8H6.2M1.2 6.2H6.2" stroke="#8a8a8a" stroke-width="0.5"/></svg><div class="t" style="left:29.8px;top:3.4px;font-weight:bold;font-size:4.9px">New</div></div><div class="hrow" style="top:40.3px"><div class="a" style="left:3px;top:2.4px;width:6.4px;height:6.4px;background:#484848;border:0.6px solid #424242"></div><svg class="a" style="left:15.9px;top:2.2px" width="7.4" height="8" viewBox="0 0 7.4 8"><path d="M0.3 0.3H5L7.1 2.2V7.7H0.3Z" fill="#b9b9b9"/><path d="M5 0.3V2.2H7.1" fill="#8e8e8e"/><path d="M1.2 3.4H6.2M1.2 4.8H6.2M1.2 6.2H6.2" stroke="#8a8a8a" stroke-width="0.5"/></svg><div class="t" style="left:29.8px;top:3.4px;font-weight:bold;font-size:4.9px">Rotate Canvas</div></div><div class="hrow" style="top:51.9px"><div class="a" style="left:3px;top:2.4px;width:6.4px;height:6.4px;background:#484848;border:0.6px solid #424242"></div><svg class="a" style="left:15.9px;top:2.2px" width="7.4" height="8" viewBox="0 0 7.4 8"><path d="M0.3 0.3H5L7.1 2.2V7.7H0.3Z" fill="#b9b9b9"/><path d="M5 0.3V2.2H7.1" fill="#8e8e8e"/><path d="M1.2 3.4H6.2M1.2 4.8H6.2M1.2 6.2H6.2" stroke="#8a8a8a" stroke-width="0.5"/></svg><div class="t" style="left:29.8px;top:3.4px;font-weight:bold;font-size:4.9px">New Guide</div></div><div class="hrow" style="top:63.5px"><div class="a" style="left:3px;top:2.4px;width:6.4px;height:6.4px;background:#484848;border:0.6px solid #424242"></div><svg class="a" style="left:15.9px;top:2.2px" width="7.4" height="8" viewBox="0 0 7.4 8"><path d="M0.3 0.3H5L7.1 2.2V7.7H0.3Z" fill="#b9b9b9"/><path d="M5 0.3V2.2H7.1" fill="#8e8e8e"/><path d="M1.2 3.4H6.2M1.2 4.8H6.2M1.2 6.2H6.2" stroke="#8a8a8a" stroke-width="0.5"/></svg><div class="t" style="left:29.8px;top:3.4px;font-weight:bold;font-size:4.9px">New Guide</div></div><div class="hrow" style="top:75.1px"><div class="a" style="left:3px;top:2.4px;width:6.4px;height:6.4px;background:#484848;border:0.6px solid #424242"></div><svg class="a" style="left:15.9px;top:2.2px" width="7.4" height="8" viewBox="0 0 7.4 8"><path d="M0.3 0.3H5L7.1 2.2V7.7H0.3Z" fill="#b9b9b9"/><path d="M5 0.3V2.2H7.1" fill="#8e8e8e"/><path d="M1.2 3.4H6.2M1.2 4.8H6.2M1.2 6.2H6.2" stroke="#8a8a8a" stroke-width="0.5"/></svg><div class="t" style="left:29.8px;top:3.4px;font-weight:bold;font-size:4.9px">New Layer</div></div><div class="hrow hsel" style="top:86.7px"><div class="a" style="left:3px;top:2.4px;width:6.4px;height:6.4px;background:#66799a;border:0.6px solid #5a6c8a"></div><svg class="a" style="left:15px;top:1.6px" width="9" height="9" viewBox="0 0 9 9"><path d="M1.2 5.2L4.2 2.2L7.6 5.6L4.6 8.4Q3.6 8.8 2.8 8Z" fill="#f0f0f0"/><path d="M3.4 0.6Q5 0 5 2.6" stroke="#f0f0f0" stroke-width="0.8" fill="none"/><path d="M7.8 5.8Q8.8 7.4 8 8.2Q7.2 8.4 7.2 7.2Z" fill="#f0f0f0"/></svg><div class="t" style="left:29.8px;top:3.4px;font-weight:bold;font-size:4.9px">Paint Bucket</div></div>
  <div class="a" style="left:102px;top:8.4px;width:7.4px;height:227px;background:#434343;border-left:0.8px solid #3c3c3c"></div>
  <!-- bottom bar -->
  <div class="a" style="left:0;top:235.4px;width:110px;height:9px;background:#4f4f4f;border-top:0.8px solid #3c3c3c"></div>
  <svg class="a" style="left:58.8px;top:237.2px" width="8" height="6" viewBox="0 0 8 6"><rect x="0.4" y="2.6" width="3.2" height="3" fill="#d2d2d2"/><rect x="4.4" y="2.6" width="3.2" height="3" fill="#d2d2d2"/><rect x="2.4" y="0.2" width="3.2" height="3" fill="#e8e8e8"/></svg>
  <svg class="a" style="left:73.6px;top:237.4px" width="8" height="6" viewBox="0 0 8 6"><rect x="0.3" y="1" width="7.4" height="4.8" rx="0.6" fill="#dcdcdc"/><rect x="2.4" y="0.2" width="3" height="1.2" fill="#dcdcdc"/><circle cx="4" cy="3.4" r="1.5" fill="#4f4f4f"/></svg>
  <svg class="a" style="left:89.4px;top:236.8px" width="6" height="7" viewBox="0 0 6 7"><path d="M0.8 2H5.2L4.8 6.8H1.2Z" fill="#cfcfcf"/><rect x="0.2" y="0.9" width="5.6" height="0.9" fill="#cfcfcf"/><rect x="2" y="0.1" width="2" height="0.9" fill="#cfcfcf"/></svg>
  <div class="a" style="left:103px;top:238.4px;width:4.6px;height:4.6px;background:repeating-linear-gradient(135deg,transparent 0,transparent 0.9px,#777 0.9px,#777 1.5px)"></div>
</div>
<!-- character panel -->
<div class="panel" id="char" style="left:548.6px;top:296.4px;width:109.4px;height:125px;background:#4f4f4f;overflow:hidden">
  <div class="a" style="left:0;top:0;width:110px;height:9.2px;background:#3f3f3f"></div>
  <div class="a" style="left:0;top:0;width:28.6px;height:9.4px;background:#4f4f4f"></div>
  <div class="t" style="left:3.2px;top:2.2px;font-size:5.1px;font-weight:bold;color:#f0f0f0">Character</div>
  <div class="t" style="left:33.4px;top:2.2px;font-size:5.1px;color:#b4b4b4">Paragraph</div>
  <div class="a" style="left:100.6px;top:3.6px;width:2px;height:0;border-left:1.4px solid transparent;border-right:1.4px solid transparent;border-top:1.8px solid #bbb"></div>
  <div class="a" style="left:104.4px;top:2.8px;width:3.6px;height:3.6px;background:repeating-linear-gradient(180deg,#bbb 0,#bbb 0.6px,transparent 0.6px,transparent 1.3px)"></div>
  <div class="a" style="left:4px;top:13.6px;width:60px;height:8.8px;background:#3d3d3d;border:0.7px solid #363636"><div class="t" style="left:2.4px;top:1.5px;font-size:5px;color:#6d6d6d">Baufhoern BT Ro...</div><div class="a" style="left:52.4px;top:-0.2px;width:7px;height:7.800000000000001px;background:#626262;border-left:0.6px solid #3a3a3a"></div><svg class="a" style="left:54.2px;top:2.6000000000000005px" width="3.6" height="2.4" viewBox="0 0 3.6 2.4"><path d="M0 0H3.6L1.8 2.4Z" fill="#c4c4c4"/></svg></div>
  <div class="a" style="left:71.4px;top:13.6px;width:27.4px;height:8.8px;background:#f1f1f1;border:0.7px solid #3a3a3a"><div class="t" style="left:2.4px;top:1.4px;font-size:5px;color:#222">Regular</div></div>
  <svg class="a" style="left:102.4px;top:17px" width="3.6" height="2.4" viewBox="0 0 3.6 2.4"><path d="M0 0H3.6L1.8 2.4Z" fill="#c4c4c4"/></svg>
  <!-- size row -->
  <div class="t" style="left:4.4px;top:28.2px;font-size:5.4px;font-weight:bold;color:#dcdcdc;font-family:'Liberation Serif',serif">T</div><div class="t" style="left:7.2px;top:26.6px;font-size:7.6px;font-weight:bold;color:#dcdcdc;font-family:'Liberation Serif',serif">T</div>
  <div class="a" style="left:14.4px;top:27.4px;width:38px;height:8.8px;background:#3d3d3d;border:0.7px solid #363636"><div class="t" style="left:2.4px;top:1.5px;font-size:5px;color:#6d6d6d">36 pt</div><div class="a" style="left:30.4px;top:-0.2px;width:7px;height:7.800000000000001px;background:#626262;border-left:0.6px solid #3a3a3a"></div><svg class="a" style="left:32.2px;top:2.6000000000000005px" width="3.6" height="2.4" viewBox="0 0 3.6 2.4"><path d="M0 0H3.6L1.8 2.4Z" fill="#c4c4c4"/></svg></div>
  <svg class="a" style="left:57.6px;top:26.8px" width="9" height="10" viewBox="0 0 9 10"><path d="M4.5 0.4L6 2H3Z M4.5 9.6L6 8H3Z" fill="#ddd"/><path d="M2 8L4.5 3L7 8M3 6.4H6" stroke="#ddd" stroke-width="0.9" fill="none"/><path d="M1 9.4H8" stroke="#ddd" stroke-width="0.7"/></svg>
  <div class="a" style="left:67.4px;top:27.4px;width:35.4px;height:8.8px;background:#3d3d3d;border:0.7px solid #363636"><div class="t" style="left:2.4px;top:1.5px;font-size:5px;color:#6d6d6d">(43.2 pt)</div><div class="a" style="left:27.799999999999997px;top:-0.2px;width:7px;height:7.800000000000001px;background:#626262;border-left:0.6px solid #3a3a3a"></div><svg class="a" style="left:29.599999999999998px;top:2.6000000000000005px" width="3.6" height="2.4" viewBox="0 0 3.6 2.4"><path d="M0 0H3.6L1.8 2.4Z" fill="#c4c4c4"/></svg></div>
  <!-- kerning row -->
  <svg class="a" style="left:3.6px;top:39.6px" width="10" height="9" viewBox="0 0 10 9"><path d="M0.6 0.6L3 7L5 0.6" stroke="#ddd" stroke-width="1" fill="none"/><path d="M4.6 7L6.8 1L9.2 7M5.6 5H8.2" stroke="#ddd" stroke-width="0.9" fill="none"/><path d="M1 8.4H9" stroke="#ddd" stroke-width="0.6"/></svg>
  <div class="a" style="left:14.4px;top:40px;width:38px;height:8.8px;background:#3d3d3d;border:0.7px solid #363636"><div class="t" style="left:2.4px;top:1.5px;font-size:5px;color:#6d6d6d">Metrics</div><div class="a" style="left:30.4px;top:-0.2px;width:7px;height:7.800000000000001px;background:#626262;border-left:0.6px solid #3a3a3a"></div><svg class="a" style="left:32.2px;top:2.6000000000000005px" width="3.6" height="2.4" viewBox="0 0 3.6 2.4"><path d="M0 0H3.6L1.8 2.4Z" fill="#c4c4c4"/></svg></div>
  <svg class="a" style="left:56.8px;top:39.6px" width="10" height="9" viewBox="0 0 10 9"><rect x="0.4" y="0.4" width="9.2" height="5.6" fill="none" stroke="#ddd" stroke-width="0.7"/><path d="M1.4 1.4L2.8 5L4.2 1.4" stroke="#ddd" stroke-width="0.8" fill="none"/><path d="M5.4 5L6.9 1.4L8.4 5" stroke="#ddd" stroke-width="0.8" fill="none"/><path d="M0.4 7.6H9.6M0.4 6.6V8.6M9.6 6.6V8.6" stroke="#ddd" stroke-width="0.6"/></svg>
  <div class="a" style="left:67.4px;top:40px;width:35.4px;height:8.8px;background:#3d3d3d;border:0.7px solid #363636"><div class="t" style="left:2.4px;top:1.5px;font-size:5px;color:#6d6d6d">0</div><div class="a" style="left:27.799999999999997px;top:-0.2px;width:7px;height:7.800000000000001px;background:#626262;border-left:0.6px solid #3a3a3a"></div><svg class="a" style="left:29.599999999999998px;top:2.6000000000000005px" width="3.6" height="2.4" viewBox="0 0 3.6 2.4"><path d="M0 0H3.6L1.8 2.4Z" fill="#c4c4c4"/></svg></div>
  <div class="a" style="left:2px;top:51.4px;width:105px;height:0.7px;background:#474747"></div>
  <!-- scale rows -->
  <div class="t" style="left:3.6px;top:55px;font-size:7.4px;font-weight:bold;color:#dcdcdc;font-family:'Liberation Serif',serif;transform:scaleX(0.62);transform-origin:0 0">I</div><div class="t" style="left:6.4px;top:55px;font-size:7.4px;font-weight:bold;color:#dcdcdc;font-family:'Liberation Serif',serif">T</div>
  <div class="a" style="left:14.4px;top:54.6px;width:26.6px;height:8.4px;background:#3d3d3d;border:0.7px solid #363636"><div class="t" style="left:2.4px;top:1.3px;font-size:5px;color:#6d6d6d">100%</div></div>
  <div class="t" style="left:68.2px;top:54.2px;font-size:7px;font-weight:bold;color:#dcdcdc;font-family:'Liberation Serif',serif">T</div><div class="a" style="left:67.4px;top:61.4px;width:6.4px;height:0.7px;background:#ddd"></div>
  <div class="a" style="left:78px;top:54.6px;width:26.2px;height:8.4px;background:#3d3d3d;border:0.7px solid #363636"><div class="t" style="left:2.4px;top:1.3px;font-size:5px;color:#6d6d6d">100%</div></div>
  <div class="t" style="left:3.4px;top:66.6px;font-size:6.4px;font-weight:bold;color:#dcdcdc;font-family:'Liberation Serif',serif">A</div><div class="t" style="left:7.6px;top:64.6px;font-size:4.4px;font-weight:bold;color:#dcdcdc;font-family:'Liberation Serif',serif">a</div><div class="t" style="left:8px;top:68.6px;font-size:3.6px;color:#dcdcdc">&#9662;</div>
  <div class="a" style="left:14.4px;top:64.8px;width:26.6px;height:8.4px;background:#3d3d3d;border:0.7px solid #363636"><div class="t" style="left:2.4px;top:1.3px;font-size:5px;color:#6d6d6d">0 pt</div></div>
  <div class="t" style="left:60.2px;top:66.4px;font-size:5px;color:#e2e2e2">Color:</div>
  <div class="a" style="left:77.8px;top:64.4px;width:26.8px;height:8.8px;background:#fdfdfd;border:0.6px solid #3c3c3c"></div>
  <!-- T buttons -->
  <div class="tb" style="left:10.6px">T</div>
  <div class="tb" style="left:22px;font-style:italic">T</div>
  <div class="tb" style="left:33px;letter-spacing:-0.6px;transform:scaleX(0.8);transform-origin:0 0">TT</div>
  <div class="tb" style="left:45.4px">T<span style="font-size:5px">T</span></div>
  <div class="tb" style="left:57.6px">T<span style="font-size:4px;vertical-align:3px">1</span></div>
  <div class="tb" style="left:69.6px">T<span style="font-size:4px;vertical-align:-0.6px">1</span></div>
  <div class="tb" style="left:83px;text-decoration:underline">T</div>
  <div class="tb" style="left:95px;text-decoration:line-through">T</div>
  <div class="a" style="left:2px;top:93.4px;width:105px;height:0.7px;background:#4a4a4a"></div>
  <!-- opentype row -->
  <div class="ot" style="left:11px">fi</div>
  <div class="ot" style="left:22px;font-style:italic">&sigma;</div>
  <div class="ot" style="left:34.4px">st</div>
  <div class="ot" style="left:46px;font-style:italic">A</div>
  <div class="ot" style="left:57px">a&#257;</div>
  <div class="ot" style="left:70.8px;font-style:italic;font-weight:bold">T</div>
  <div class="ot" style="left:81.8px">1<span style="font-size:4px;vertical-align:2.4px">st</span></div>
  <div class="ot" style="left:94.6px">&frac12;</div>
  <div class="a" style="left:2px;top:107.6px;width:105px;height:0.7px;background:#484848"></div>
  <!-- language row -->
  <div class="a" style="left:8px;top:111.6px;width:51.4px;height:8.2px;background:#585858;border:0.7px solid #454545;border-radius:1px"><div class="t" style="left:3.2px;top:1.4px;font-size:5px;color:#c6c6c6">English: USA</div><svg class="a" style="left:45.6px;top:1.4px" width="3.4" height="5" viewBox="0 0 4 6"><path d="M0.4 2.4L2 0.4L3.6 2.4ZM0.4 3.6L2 5.6L3.6 3.6Z" fill="#b0b0b0"/></svg></div>
  <div class="t" style="left:62.2px;top:112.4px;font-size:4.4px;color:#d0d0d0;font-weight:bold">a</div><div class="t" style="left:64.8px;top:112.4px;font-size:6.4px;color:#d0d0d0;font-weight:bold">a</div>
  <div class="a" style="left:75px;top:111.6px;width:31px;height:8.2px;background:#585858;border:0.7px solid #454545;border-radius:1px"><div class="t" style="left:3.2px;top:1.4px;font-size:5px;color:#c6c6c6">Sharp</div><svg class="a" style="left:25.4px;top:1.4px" width="3.4" height="5" viewBox="0 0 4 6"><path d="M0.4 2.4L2 0.4L3.6 2.4ZM0.4 3.6L2 5.6L3.6 3.6Z" fill="#b0b0b0"/></svg></div>
  <div class="a" style="left:50px;top:122.6px;width:9px;height:0.8px;background:#333"></div>
</div>
<div class="a" style="left:658px;top:42px;width:2.6px;height:384px;background:#333"></div>
<!-- icon strip -->
<div class="a" style="left:660px;top:31px;width:19px;height:7px;background:#3a3a3a"><svg class="a" style="left:12.4px;top:2.6px" width="5" height="3" viewBox="0 0 5 3"><path d="M0 1.5L2 0V3ZM2.6 1.5L4.6 0V3Z" fill="#d0d0d0"/></svg></div>
<div class="panel" id="strip" style="left:660.4px;top:38px;width:17.8px;height:388px;background:#505050;border-left:0.8px solid #3c3c3c">
  <div class="a" style="left:0.6px;top:1.6px;width:16px;height:17.6px;background:#565656;border-bottom:0.8px solid #404040"></div>
  <div class="a" style="left:5px;top:3px;width:7.6px;height:1.4px;background:repeating-linear-gradient(90deg,#3e3e3e 0,#3e3e3e 0.8px,#686868 0.8px,#686868 1.6px)"></div>
  <svg class="a" style="left:3.4px;top:6.4px" width="11" height="11" viewBox="0 0 11 11"><path d="M0.6 0.8H3.6V3.4M0.6 0.8V3.4H3.6" stroke="#d8d8d8" stroke-width="0.8" fill="none"/><path d="M2.2 3.6V6.6H4.6" stroke="#d8d8d8" stroke-width="0.8" fill="none"/><rect x="5" y="5.2" width="4.6" height="4.8" fill="none" stroke="#d8d8d8" stroke-width="0.8"/><path d="M4.4 2.2Q8.6 1.6 8.6 4.4M7.6 3.6L8.6 4.8L9.6 3.6" stroke="#d8d8d8" stroke-width="0.8" fill="none"/></svg>
  <div class="a" style="left:0.6px;top:21px;width:16px;height:17.6px;background:#565656;border-bottom:0.8px solid #404040"></div>
  <div class="a" style="left:5px;top:22.4px;width:7.6px;height:1.4px;background:repeating-linear-gradient(90deg,#3e3e3e 0,#3e3e3e 0.8px,#686868 0.8px,#686868 1.6px)"></div>
  <svg class="a" style="left:3.2px;top:26px" width="11" height="10" viewBox="0 0 11 10"><path d="M0.6 1V4M0.6 2.4H2.6M1.8 1V4" stroke="#d8d8d8" stroke-width="0.7" fill="none"/><path d="M5.6 0.6H8.2V4.4L9.6 6.2V7.4H4.2V6.2L5.6 4.4Z" fill="#e2e2e2"/><rect x="3.6" y="8" width="6.8" height="1.4" fill="#e2e2e2"/></svg>
</div>
<!-- color panel -->
<div class="a" style="left:680px;top:31px;width:120px;height:7px;background:#3a3a3a"><svg class="a" style="left:113px;top:2.6px" width="5" height="3" viewBox="0 0 5 3"><path d="M2 1.5L0 0V3ZM4.6 1.5L2.6 0V3Z" fill="#d0d0d0"/></svg></div>
<div class="panel" id="color" style="left:680px;top:38px;width:120px;height:155px;background:#535353;overflow:hidden">
  <div class="a" style="left:0;top:0;width:120px;height:8px;background:#3f3f3f"></div>
  <div class="a" style="left:0.6px;top:0;width:19px;height:8.2px;background:#535353"></div>
  <div class="t" style="left:3.4px;top:1.7px;font-size:5.1px;font-weight:bold;color:#f0f0f0">Color</div>
  <div class="t" style="left:23.6px;top:1.7px;font-size:5.1px;color:#b2b2b2">Swatches</div>
  <div class="a" style="left:110.4px;top:3px;width:2px;height:0;border-left:1.4px solid transparent;border-right:1.4px solid transparent;border-top:1.8px solid #aaa"></div>
  <div class="a" style="left:114.4px;top:2.2px;width:3.6px;height:3.6px;background:repeating-linear-gradient(180deg,#aaa 0,#aaa 0.6px,transparent 0.6px,transparent 1.3px)"></div>
  <div class="a" style="left:10px;top:19px;width:9.2px;height:9.2px;background:#1d3fa6;border:0.9px solid #b9c3dc"></div>
  <div class="a" style="left:4.4px;top:13.6px;width:9.4px;height:9.4px;background:#1d3fa6;border:0.9px solid #b9c3dc"></div>
  <div class="a" style="left:22px;top:11.4px;width:72px;height:139px;background:linear-gradient(180deg,rgba(0,0,0,0) 0%,rgba(0,0,0,0.5) 50%,#000 100%),linear-gradient(90deg,#ffffff 0%,#6c8cf8 45%,#0a3cf0 100%)"></div>
  <div class="a" style="left:76px;top:65.4px;width:5px;height:5px;border-radius:50%;border:0.7px solid #e8e8e8"></div>
  <div class="a" style="left:102px;top:11.4px;width:10px;height:139px;background:linear-gradient(180deg,#ff0000 0%,#ff00ff 16.6%,#0000ff 33.3%,#00ffff 50%,#00ff00 66.6%,#ffff00 83.3%,#ff0000 100%)"></div>
  <div class="a" style="left:97.6px;top:59.6px;width:0;height:0;border-top:1.6px solid transparent;border-bottom:1.6px solid transparent;border-left:2.4px solid #f2f2f2"></div>
</div>
<!-- layers panel -->
<div class="panel" id="layers" style="left:680px;top:193.6px;width:120px;height:233px;background:#535353;overflow:hidden;border-top:0.8px solid #3a3a3a">
  <div class="a" style="left:0;top:0;width:120px;height:8px;background:#3f3f3f"></div>
  <div class="a" style="left:0.6px;top:0;width:20.4px;height:8.2px;background:#535353"></div>
  <div class="t" style="left:3.2px;top:1.7px;font-size:5.1px;font-weight:bold;color:#f0f0f0">Layers</div>
  <div class="t" style="left:24.6px;top:1.7px;font-size:5.1px;color:#b2b2b2">Channels</div>
  <div class="t" style="left:53.4px;top:1.7px;font-size:5.1px;color:#b2b2b2">Paths</div>
  <div class="a" style="left:110.4px;top:3px;width:2px;height:0;border-left:1.4px solid transparent;border-right:1.4px solid transparent;border-top:1.8px solid #aaa"></div>
  <div class="a" style="left:114.4px;top:2.2px;width:3.6px;height:3.6px;background:repeating-linear-gradient(180deg,#aaa 0,#aaa 0.6px,transparent 0.6px,transparent 1.3px)"></div>
  <!-- filter row -->
  <div class="a" style="left:3px;top:10.2px;width:43px;height:8.8px;background:#5b5b5b;border:0.7px solid #444;border-radius:1px"><svg class="a" style="left:2px;top:1.4px" width="5" height="5.4" viewBox="0 0 5 5.4"><circle cx="3" cy="2" r="1.5" fill="none" stroke="#bdbdbd" stroke-width="0.8"/><path d="M1.9 3.1L0.4 5" stroke="#bdbdbd" stroke-width="0.9"/></svg><div class="t" style="left:8.4px;top:1.7px;font-size:5px;color:#a4a4a4">Kind</div><svg class="a" style="left:37px;top:1.7px" width="3.4" height="5" viewBox="0 0 4 6"><path d="M0.4 2.4L2 0.4L3.6 2.4ZM0.4 3.6L2 5.6L3.6 3.6Z" fill="#a8a8a8"/></svg></div>
  <svg class="a" style="left:52px;top:11.8px" width="7" height="6" viewBox="0 0 7 6"><rect x="0.4" y="0.4" width="6.2" height="5.2" fill="none" stroke="#a4a4a4" stroke-width="0.7"/><path d="M1 5L2.8 2.8L4 4L5 3.2L6.2 5Z" fill="#a4a4a4"/></svg>
  <svg class="a" style="left:64.4px;top:11.6px" width="6.4" height="6.4" viewBox="0 0 6.4 6.4"><circle cx="3.2" cy="3.2" r="2.7" fill="none" stroke="#a4a4a4" stroke-width="0.8"/><path d="M3.2 0.5A2.7 2.7 0 0 0 3.2 5.9Z" fill="#a4a4a4"/></svg>
  <div class="t" style="left:76.4px;top:10.8px;font-size:7.4px;color:#a4a4a4">T</div>
  <svg class="a" style="left:88.4px;top:11.6px" width="6.6" height="6.6" viewBox="0 0 6.6 6.6"><rect x="1.3" y="1.3" width="4" height="4" fill="none" stroke="#a4a4a4" stroke-width="0.7"/><rect x="0.2" y="0.2" width="1.6" height="1.6" fill="#a4a4a4"/><rect x="4.8" y="0.2" width="1.6" height="1.6" fill="#a4a4a4"/><rect x="0.2" y="4.8" width="1.6" height="1.6" fill="#a4a4a4"/><rect x="4.8" y="4.8" width="1.6" height="1.6" fill="#a4a4a4"/></svg>
  <svg class="a" style="left:100.4px;top:11.2px" width="7" height="7.4" viewBox="0 0 7 7.4"><rect x="0.4" y="3.4" width="4.8" height="3.6" fill="#a4a4a4"/><path d="M1.4 3.4V2A1.4 1.4 0 0 1 4.2 2V3.4" stroke="#a4a4a4" stroke-width="0.8" fill="none"/><path d="M5.6 0.6L6.6 2.6" stroke="#a4a4a4" stroke-width="0.7"/></svg>
  <div class="a" style="left:113.4px;top:10.4px;width:3.2px;height:8px;background:#474747;border:0.6px solid #3a3a3a;border-radius:1px"></div><div class="a" style="left:113.8px;top:10.8px;width:2.4px;height:2.6px;background:#8a8a8a"></div>
  <div class="a" style="left:0;top:21.6px;width:120px;height:0.7px;background:#474747"></div>
  <!-- blend row -->
  <div class="a" style="left:3px;top:25px;width:62.4px;height:8.8px;background:#5b5b5b;border:0.7px solid #444;border-radius:1px"><div class="t" style="left:3px;top:1.7px;font-size:5px;color:#c4c4c4">Normal</div><svg class="a" style="left:56.6px;top:1.7px" width="3.4" height="5" viewBox="0 0 4 6"><path d="M0.4 2.4L2 0.4L3.6 2.4ZM0.4 3.6L2 5.6L3.6 3.6Z" fill="#a8a8a8"/></svg></div>
  <div class="t" style="left:69.8px;top:27px;font-size:5px;color:#cfcfcf">Opacity:</div>
  <div class="a" style="left:90px;top:25.2px;width:16.4px;height:8.6px;background:#4a4a4a;border:0.7px solid #3e3e3e"><div class="t" style="left:2px;top:1.6px;font-size:5px;color:#6e6e6e">100%</div></div>
  <div class="a" style="left:107.6px;top:25.2px;width:8.4px;height:8.6px;background:#595959;border:0.7px solid #424242"><svg class="a" style="left:2px;top:2.6px" width="3.6" height="2.4" viewBox="0 0 3.6 2.4"><path d="M0 0H3.6L1.8 2.4Z" fill="#777"/></svg></div>
  <!-- lock row -->
  <div class="t" style="left:3.2px;top:41.4px;font-size:5px;color:#cfcfcf">Lock:</div>
  <svg class="a" style="left:18.4px;top:40px" width="6.6" height="6.6" viewBox="0 0 6.6 6.6"><rect x="0.4" y="0.4" width="5.8" height="5.8" fill="none" stroke="#d2d2d2" stroke-width="0.7"/><path d="M0.4 2.3H6.2M0.4 4.3H6.2M2.3 0.4V6.2M4.3 0.4V6.2" stroke="#d2d2d2" stroke-width="0.5"/></svg>
  <svg class="a" style="left:29.4px;top:39.8px" width="8" height="7" viewBox="0 0 8 7"><path d="M7.6 0.4L3.4 4.2L4.2 5Z" fill="#dadada"/><path d="M3.2 4.4Q1.4 4.6 0.4 6.8Q3 6.6 4 5.2Z" fill="#dadada"/></svg>
  <svg class="a" style="left:41px;top:39.6px" width="7.6" height="7.6" viewBox="0 0 7.6 7.6"><path d="M3.8 0.8V6.8M0.8 3.8H6.8" stroke="#d2d2d2" stroke-width="0.8"/><path d="M3.8 0L2.8 1.4H4.8ZM3.8 7.6L2.8 6.2H4.8ZM0 3.8L1.4 2.8V4.8ZM7.6 3.8L6.2 2.8V4.8Z" fill="#d2d2d2"/></svg>
  <svg class="a" style="left:52.6px;top:39.4px" width="6" height="7.4" viewBox="0 0 6 7.4"><rect x="0.4" y="3.2" width="5.2" height="3.8" rx="0.5" fill="#dcdcdc"/><path d="M1.5 3.2V2A1.5 1.5 0 0 1 4.5 2V3.2" stroke="#dcdcdc" stroke-width="0.9" fill="none"/></svg>
  <div class="t" style="left:81px;top:41.4px;font-size:5px;color:#cfcfcf">Fill:</div>
  <div class="a" style="left:90px;top:39.4px;width:16.4px;height:8.6px;background:#4a4a4a;border:0.7px solid #3e3e3e"><div class="t" style="left:2px;top:1.6px;font-size:5px;color:#6e6e6e">100%</div></div>
  <div class="a" style="left:107.6px;top:39.4px;width:8.4px;height:8.6px;background:#595959;border:0.7px solid #424242"><svg class="a" style="left:2px;top:2.6px" width="3.6" height="2.4" viewBox="0 0 3.6 2.4"><path d="M0 0H3.6L1.8 2.4Z" fill="#777"/></svg></div>
  <!-- layer list -->
  <div class="a" style="left:0;top:50.4px;width:120px;height:176px;background:#4b4b4b;border-top:0.8px solid #3c3c3c"></div>
  <div class="a" style="left:14.6px;top:50.0px;width:0.8px;height:50.6px;background:#3e3e3e"></div>
  <div class="a" style="left:15.4px;top:50.2px;width:96.6px;height:15.8px;background:#6b7f9e"></div>
  <div class="a" style="left:16.6px;top:51.6px;width:16.6px;height:12.6px;border:0.7px solid #cfd6e2;background:#8b9bb4"></div>
  <div class="a" style="left:17.8px;top:52.8px;width:14.2px;height:10.2px;background:#fdfdfd"></div>
  <div class="t" style="left:38px;top:55.8px;font-size:5.1px;font-weight:bold;color:#f4f4f4">Layer 1</div>
  <div class="t" style="left:99.4px;top:54.2px;font-size:7px;font-style:italic;color:#f0f0f0;font-family:'Liberation Serif',serif">fx</div>
  <div class="a" style="left:108.6px;top:57.4px;width:0;height:0;border-left:1.5px solid transparent;border-right:1.5px solid transparent;border-bottom:2px solid #eee"></div>
  <svg class="a" style="left:3.6px;top:55.8px" width="7" height="4.6" viewBox="0 0 7 4.6"><path d="M0.3 2.3Q3.5 -1.2 6.7 2.3Q3.5 5.8 0.3 2.3Z" fill="#ececec"/><circle cx="3.5" cy="2.3" r="1.2" fill="#4a4a4a"/></svg>
  <div class="a" style="left:15.4px;top:66.0px;width:96.6px;height:19px;background:#4f4f4f"></div>
  <svg class="a" style="left:24.8px;top:69.0px" width="5.6" height="3.8" viewBox="0 0 7 4.6"><path d="M0.3 2.3Q3.5 -1.2 6.7 2.3Q3.5 5.8 0.3 2.3Z" fill="#ececec"/><circle cx="3.5" cy="2.3" r="1.3" fill="#4a4a4a"/></svg>
  <div class="t" style="left:34.6px;top:68.4px;font-size:5px;color:#ececec">Effects</div>
  <svg class="a" style="left:33.8px;top:78.4px" width="5.6" height="3.8" viewBox="0 0 7 4.6"><path d="M0.3 2.3Q3.5 -1.2 6.7 2.3Q3.5 5.8 0.3 2.3Z" fill="#ececec"/><circle cx="3.5" cy="2.3" r="1.3" fill="#4a4a4a"/></svg>
  <div class="t" style="left:43.2px;top:77.8px;font-size:5px;color:#ececec">Gradient Overlay</div>
  <div class="a" style="left:0;top:85.0px;width:112px;height:0.8px;background:#3e3e3e"></div>
  <div class="a" style="left:0;top:85.8px;width:112px;height:15px;background:#525252"></div>
  <div class="a" style="left:14.6px;top:85.8px;width:0.8px;height:15px;background:#3e3e3e"></div>
  <svg class="a" style="left:3.6px;top:91.0px" width="7" height="4.6" viewBox="0 0 7 4.6"><path d="M0.3 2.3Q3.5 -1.2 6.7 2.3Q3.5 5.8 0.3 2.3Z" fill="#ececec"/><circle cx="3.5" cy="2.3" r="1.2" fill="#4a4a4a"/></svg>
  <div class="a" style="left:17.2px;top:87.4px;width:15.4px;height:10.6px;background:#fdfdfd;border:0.5px solid #c6c6c6"></div>
  <div class="t" style="left:38px;top:90.2px;font-size:5.1px;font-style:italic;font-weight:bold;color:#f0f0f0">Background</div>
  <svg class="a" style="left:98.6px;top:88.8px" width="5.6" height="7" viewBox="0 0 6 7.4"><rect x="0.4" y="3.2" width="5.2" height="3.8" rx="0.5" fill="#e4e4e4"/><path d="M1.5 3.2V2A1.5 1.5 0 0 1 4.5 2V3.2" stroke="#e4e4e4" stroke-width="0.9" fill="none"/></svg>
  <div class="a" style="left:0;top:100.8px;width:112px;height:0.8px;background:#3e3e3e"></div>
  <div class="a" style="left:112px;top:50.0px;width:8px;height:175px;background:#4a4a4a;border-left:0.8px solid #3c3c3c"></div>
  <div class="a" style="left:113.2px;top:50.8px;width:5.6px;height:16px;background:#676767;border-radius:1px"></div>
  <!-- bottom icons -->
  <div class="a" style="left:0;top:226.4px;width:120px;height:7px;background:#535353;border-top:0.8px solid #3c3c3c"></div>
  <div class="a" style="left:19px;top:230px;width:88px;height:3px;background:repeating-linear-gradient(90deg,#8e8e8e 0,#8e8e8e 3.2px,transparent 3.2px,transparent 8.3px)"></div>
</div>
<!-- watermark -->
<svg class="a" style="left:680px;top:370px" width="120" height="56" viewBox="0 0 120 56">
  <g fill="#b4b4b4" stroke="none">
    <path d="M46.8 18.9L78 10.4L112.3 18.9L96 24.4V29Q95.4 37.9 79 37.9Q62.8 37.9 62.3 29V24.2Z"/>
    <path d="M52.2 18.6H53.2V26.6L55.4 36.8H49.8L52.2 26.6Z"/>
    <circle cx="40.6" cy="7.4" r="1.6"/>
    <circle cx="22.6" cy="7" r="1.6"/>
    <circle cx="35" cy="22.8" r="1.45"/><circle cx="38.4" cy="22.8" r="1.45"/>
  </g>
  <g fill="none" stroke="#b4b4b4" stroke-linecap="round" stroke-linejoin="round">
    <!-- saed -->
    <path d="M110.2 37.2V42.8Q110.2 45.2 107.8 45.2H11.4Q8.4 45.2 9 42" stroke-width="4.3" stroke-linecap="butt"/>
    <path d="M104.9 37.8V45M99.7 37.8V45" stroke-width="3.4" stroke-linecap="butt"/>
    <path d="M38.7 27.2V45" stroke-width="3.9" stroke-linecap="butt"/>
    <path d="M35.6 39.4Q30 33.4 25 38.2Q26 41.8 31.6 43.2" stroke-width="3.3"/>
    <path d="M16.6 32.4L21.8 43.4" stroke-width="4"/>
    <!-- news -->
    <path d="M42.4 11.4V16.4Q42.4 18 40.8 18H33.6" stroke-width="3"/>
    <path d="M33.4 18Q33.6 13 30.4 13.2Q27.4 13.6 28.2 16.4Q29.6 18.4 33 18Q32.4 22.6 26.6 23.8" stroke-width="2.8"/>
    <path d="M23.4 11.8Q24.4 19.6 18.4 20.6" stroke-width="3"/>
  </g>
</svg>
</div>
</body>
</html>
